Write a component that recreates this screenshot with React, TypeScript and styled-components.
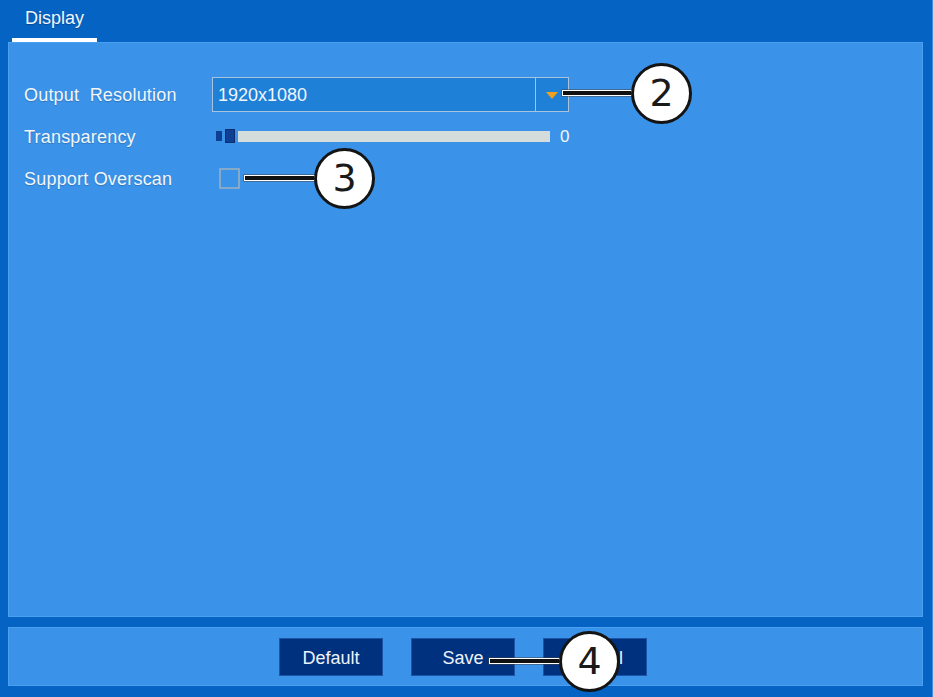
import styled, { createGlobalStyle } from "styled-components";

const GlobalStyle = createGlobalStyle`
  html, body {
    margin: 0;
    padding: 0;
    background: #0563c4;
  }
  * { box-sizing: border-box; }
`;

const Screen = styled.div`
  position: relative;
  width: 933px;
  height: 697px;
  background: #0563c4;
  font-family: "Liberation Sans", Arial, sans-serif;
  color: #f2f6fb;
  display: flex;
  flex-direction: column;
  padding: 0 9px 0 8px;
  border-right: 1px solid #3f8fe0;
  overflow: hidden;
`;

const TabBar = styled.div`
  height: 42px;
  display: flex;
  align-items: flex-end;
  padding-left: 4px;
`;

const Tab = styled.div<{ $active?: boolean }>`
  width: 85px;
  height: 42px;
  font-size: 18px;
  padding: 8px 0 0 13px;
  border-bottom: 4px solid ${(p) => (p.$active ? "#ffffff" : "transparent")};
  text-shadow: 0 1px 1px rgba(0, 0, 0, 0.25);
`;

const Panel = styled.div`
  height: 575px;
  background: #3a93e9;
  border: 1px solid #4a9ff0;
  padding: 34px 0 0 15px;
  display: flex;
  flex-direction: column;
  gap: 8px;
`;

const Row = styled.div`
  display: flex;
  align-items: center;
  height: 34px;
`;

const Label = styled.div`
  width: 188px;
  font-size: 18px;
  letter-spacing: 0.2px;
  padding-top: 2px;
  text-shadow: 0 1px 1px rgba(0, 0, 0, 0.2);
`;

const Select = styled.div`
  width: 357px;
  height: 35px;
  display: flex;
  border: 1px solid #a9c3de;
  background: #1f80d8;
`;

const SelectValue = styled.div`
  flex: 1;
  display: flex;
  align-items: center;
  padding: 2px 0 0 5px;
  font-size: 18px;
  border-right: 1px solid #a9c3de;
`;

const SelectArrow = styled.div`
  width: 32px;
  display: flex;
  align-items: center;
  justify-content: center;
  &::after {
    content: "";
    border-left: 6px solid transparent;
    border-right: 6px solid transparent;
    border-top: 7px solid #f0a020;
    margin-top: 2px;
  }
`;

const Slider = styled.div`
  display: flex;
  align-items: center;
  margin-left: 4px;
  height: 14px;
`;

const SliderTick = styled.div`
  width: 6px;
  height: 10px;
  background: #0d3f94;
  margin-right: 3px;
`;

const SliderThumb = styled.div`
  width: 10px;
  height: 14px;
  background: #0d3f94;
  border: 1px solid #0a2d6e;
  margin-right: 3px;
`;

const SliderTrack = styled.div`
  width: 312px;
  height: 11px;
  background: #d5dcdc;
`;

const SliderValue = styled.div`
  font-size: 17px;
  margin-left: 10px;
  padding-top: 2px;
`;

const Checkbox = styled.div`
  width: 21px;
  height: 21px;
  margin-left: 7px;
  border: 2px solid #86a9c8;
  background: transparent;
`;

const Footer = styled.div`
  margin-top: 10px;
  height: 59px;
  background: #3a93e9;
  border: 1px solid #4a9ff0;
  display: flex;
  justify-content: center;
  align-items: center;
  gap: 28px;
  padding-right: 5px;
`;

const Button = styled.div`
  width: 104px;
  height: 38px;
  background: #00317f;
  border: 1px solid #1a55a8;
  display: flex;
  align-items: center;
  justify-content: center;
  padding-top: 4px;
  font-size: 18px;
  color: #eef3fa;
`;

const Callout = styled.div<{ $x: number; $y: number }>`
  position: absolute;
  left: ${(p) => p.$x}px;
  top: ${(p) => p.$y - 30}px;
  height: 60px;
  display: flex;
  align-items: center;
`;

const Leader = styled.div<{ $len: number }>`
  width: ${(p) => p.$len}px;
  height: 6px;
  background: #111;
  border: 1.5px solid #fff;
  box-shadow: 0 0 0 0.5px #444;
`;

const Bubble = styled.div`
  width: 61px;
  height: 61px;
  border-radius: 50%;
  background: #fff;
  border: 3px solid #141414;
  display: flex;
  align-items: center;
  justify-content: center;
  font-family: "DejaVu Sans", "Liberation Sans", sans-serif;
  font-size: 38px;
  color: #1a1a1a;
  margin-left: -1px;
`;

export default function App() {
  return (
    <>
      <GlobalStyle />
      <Screen>
        <TabBar>
          <Tab $active>Display</Tab>
        </TabBar>
        <Panel>
          <Row>
            <Label>Output&nbsp; Resolution</Label>
            <Select>
              <SelectValue>1920x1080</SelectValue>
              <SelectArrow />
            </Select>
          </Row>
          <Row>
            <Label>Transparency</Label>
            <Slider>
              <SliderTick />
              <SliderThumb />
              <SliderTrack />
            </Slider>
            <SliderValue>0</SliderValue>
          </Row>
          <Row>
            <Label>Support Overscan</Label>
            <Checkbox />
          </Row>
        </Panel>
        <Footer>
          <Button>Default</Button>
          <Button>Save</Button>
          <Button>Cancel</Button>
        </Footer>

        <Callout $x={562} $y={93}>
          <Leader $len={70} />
          <Bubble>2</Bubble>
        </Callout>
        <Callout $x={244} $y={178}>
          <Leader $len={71} />
          <Bubble>3</Bubble>
        </Callout>
        <Callout $x={489} $y={661}>
          <Leader $len={71} />
          <Bubble>4</Bubble>
        </Callout>
      </Screen>
    </>
  );
}
